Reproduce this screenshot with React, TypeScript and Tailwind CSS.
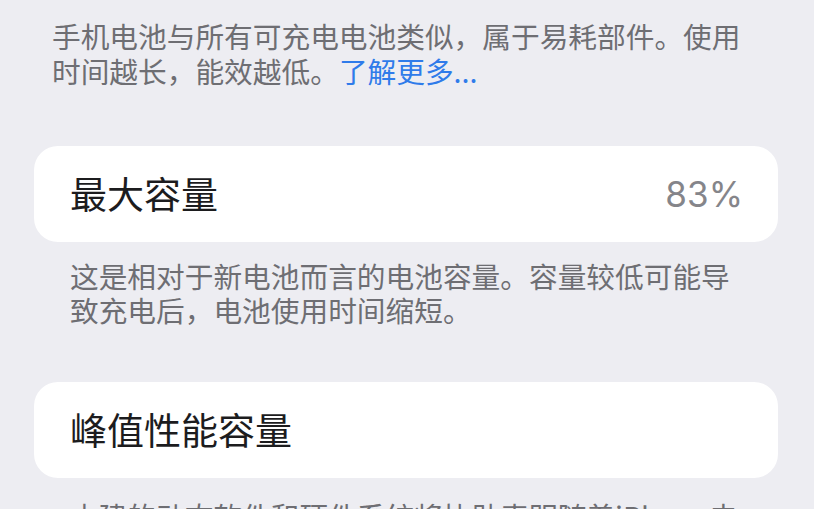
import React from "react";

const cjk = { fontFamily: '"Noto Sans CJK SC", "Noto Sans", sans-serif' };

export default function App() {
  return (
    <div
      className="w-[814px] h-[509px] overflow-hidden bg-[#EDEDF2] flex flex-col"
      style={cjk}
    >
      <div className="pt-[19px] pl-[52px] pr-[40px] text-[28.7px] leading-[34.5px] text-[#6E6E73]">
        手机电池与所有可充电电池类似，属于易耗部件。使用
        <br />
        时间越长，能效越低。<span className="text-[#2F7BEA]">了解更多...</span>
      </div>

      <div className="mt-[58px] mr-[36px] ml-[34px] h-[96px] bg-white rounded-[24px] flex items-center justify-between pl-[36px] pr-[35px] shrink-0">
        <span className="text-[37px] text-[#1C1C1E]">最大容量</span>
        <span
          className="text-[35px] text-[#85858A]"
          style={{ fontFamily: 'Inter, "Noto Sans", sans-serif' }}
        >
          83%
        </span>
      </div>

      <div className="mt-[17px] pl-[70px] pr-[40px] text-[28.7px] leading-[34px] text-[#6E6E73]">
        这是相对于新电池而言的电池容量。容量较低可能导
        <br />
        致充电后，电池使用时间缩短。
      </div>

      <div className="mt-[55px] mr-[36px] ml-[34px] h-[96px] bg-white rounded-[24px] flex items-center pl-[36px] pr-[35px] shrink-0">
        <span className="text-[37px] text-[#1C1C1E]">峰值性能容量</span>
      </div>

      <div className="mt-[21px] pl-[70px] pr-[40px] text-[28.7px] leading-[34px] text-[#6E6E73] whitespace-nowrap">
        内建的动态软件和硬件系统将协助表明随着iPhone电
      </div>
    </div>
  );
}
